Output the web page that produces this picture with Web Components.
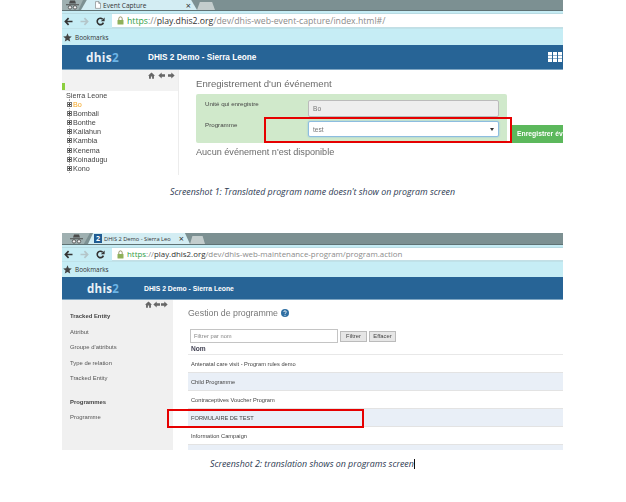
<!DOCTYPE html>
<html>
<head>
<meta charset="utf-8">
<title>Translated program name</title>
<style>
  html, body { margin: 0; padding: 0; background: #fff; }
  body { width: 626px; height: 502px; overflow: hidden; font-family: "Liberation Sans", Arial, sans-serif; }
</style>
</head>
<body>
<issue-page>
  <browser-shot tab="Event Capture" tab-width="116" tab-pad="14" tab-size="6.6" spy-width="21" new-tab="18" strip="11" gap="3" address="14" bookmarks="17" url-size="8.7" path="/dev/dhis-web-event-capture/index.html#/">
    <dhis-header title="DHIS 2 Demo - Sierra Leone" height="25" logo-size="11.8" title-size="8.2" title-left="86" logo-left="24" grid></dhis-header>
    <event-screen></event-screen>
  </browser-shot>
  <shot-caption gap="10" left="108" size="8.8">Screenshot 1: Translated program name doesn't show on program screen</shot-caption>
  <browser-shot style="margin-top:34px" tab="DHIS 2 Demo - Sierra Leo" badge tab-width="102" tab-pad="6" tab-size="5.7" spy-width="28" new-tab="15" strip="12" gap="3" address="13" bookmarks="16" url-size="7.9" path="/dev/dhis-web-maintenance-program/program.action">
    <dhis-header title="DHIS 2 Demo - Sierra Leone" height="23" logo-size="11.5" title-size="6.8" title-left="82" logo-left="25"></dhis-header>
    <program-screen></program-screen>
  </browser-shot>
  <shot-caption gap="7" left="148" size="8.85" cursor>Screenshot 2: translation shows on programs screen</shot-caption>
</issue-page>

<script>
// page column, everything sits 62px in from the left like the pasted screenshots
class IssuePage extends HTMLElement {
  constructor() {
    super();
    this.attachShadow({ mode: 'open' });
    this.shadowRoot.innerHTML = `
      <style>
        :host { display: flex; flex-direction: column; width: 501px; margin-left: 62px; }
      </style>
      <slot></slot>
    `;
  }
}

class BrowserShot extends HTMLElement {
  constructor() {
    super();
    this.attachShadow({ mode: 'open' });
  }

  connectedCallback() {
    const a = n => this.getAttribute(n);
    const badge = this.hasAttribute('badge')
      ? '<span class="badge">2</span>'
      : `<svg class="file" width="6" height="8" viewBox="0 0 8 10"><path d="M.7.5h4.4l2.2 2.3v6.7H.7z M5 .5v2.4h2.3" fill="#fff" stroke="#777" stroke-width=".8"/></svg>`;
    this.shadowRoot.innerHTML = `
      <style>
        :host { display: block; width: 501px; overflow: hidden; filter: blur(.4px); font-family: "Open Sans", "Liberation Sans", sans-serif; }
        .strip { display: flex; height: ${a('strip')}px; box-sizing: border-box; background: #7c9092; border-bottom: 1px solid #5f7274; }
        .spy { width: ${a('spy-width')}px; background: #9fb0b1; display: flex; align-items: center; justify-content: center; clip-path: polygon(0 0, 100% 0, 78% 100%, 0 100%); }
        .tab { width: ${a('tab-width')}px; margin-left: -2px; box-sizing: border-box; padding: 0 6px 0 ${a('tab-pad')}px; background: #d3edf3; display: flex; align-items: center; gap: 2px; font-size: ${a('tab-size')}px; color: #333; white-space: nowrap; clip-path: polygon(0 100%, 5% 0, 95% 0, 100% 100%); }
        .tab b { font-weight: 400; flex: 1; }
        .tab i { font-style: normal; font-size: 9px; color: #333; }
        .badge { width: 8px; height: 9px; background: #215c92; color: #fff; font-size: 7px; font-weight: 700; line-height: 9px; text-align: center; }
        .new { width: ${a('new-tab')}px; height: 8px; margin-top: auto; background: #c3cdcd; clip-path: polygon(0 100%, 16% 0, 84% 0, 100% 100%); }
        .sep { height: ${a('gap')}px; background: #c6ecf4; box-sizing: border-box; border-bottom: 1px solid #b9dbe2; }
        .address { display: flex; height: ${a('address')}px; background: #c6edf5; }
        .nav { width: 50px; display: flex; align-items: center; gap: 7px; padding-left: 2px; box-sizing: border-box; }
        .url { flex: 1; background: #fff; display: flex; align-items: center; gap: 3px; padding-left: 5px; font-size: ${a('url-size')}px; white-space: nowrap; color: #8b8b8b; border-bottom: 1px solid #c3dfe5; }
        .url em { font-style: normal; color: #2f9e46; }
        .url strong { font-weight: 400; color: #333; }
        .marks { height: ${a('bookmarks')}px; background: #c6edf5; display: flex; align-items: center; gap: 3px; padding-left: 1px; font-size: 6.4px; color: #333; box-sizing: border-box; border-top: 1px solid #bfe2e9; }
      </style>
      <div class="strip">
        <div class="spy">
          <svg width="15" height="10" viewBox="0 0 15 10"><path d="M4 3.4 5 .6h5l1 2.8z M1 4.2h13v1H1z" fill="#4c4c4c"/><circle cx="5" cy="7.4" r="1.7" fill="#f3f3f3" stroke="#444" stroke-width=".8"/><circle cx="10" cy="7.4" r="1.7" fill="#f3f3f3" stroke="#444" stroke-width=".8"/></svg>
        </div>
        <div class="tab">${badge}<b>${a('tab')}</b><i>×</i></div>
        <div class="new"></div>
      </div>
      <div class="sep"></div>
      <div class="address">
        <div class="nav">
          <svg width="9" height="9" viewBox="0 0 9 9"><path d="M8.5 4.5H2M4.6 1.2 1.4 4.5l3.2 3.3" fill="none" stroke="#333" stroke-width="1.7"/></svg>
          <svg width="9" height="9" viewBox="0 0 9 9"><path d="M.5 4.5H7M4.4 1.2l3.2 3.3-3.2 3.3" fill="none" stroke="#b4c5c9" stroke-width="1.7"/></svg>
          <svg width="9" height="9" viewBox="0 0 9 9"><path d="M7.4 5.6A3.2 3.2 0 1 1 6.6 2.1" fill="none" stroke="#333" stroke-width="1.6"/><path d="M8.6.4v3.8H4.8z" fill="#333"/></svg>
        </div>
        <div class="url">
          <svg width="7" height="9" viewBox="0 0 7 9"><path d="M1.8 4V2.6a1.7 1.7 0 0 1 3.4 0V4" fill="none" stroke="#8a8a5a" stroke-width=".9"/><rect x=".5" y="4" width="6" height="4.6" rx=".5" fill="#8fb05a"/></svg>
          <span><em>https</em><span>://</span><strong>play.dhis2.org</strong>${a('path')}</span>
        </div>
      </div>
      <div class="marks">
        <svg width="9" height="9" viewBox="0 0 10 10"><path d="M5 .4 6.4 3.6l3.4.3-2.6 2.2.8 3.4L5 7.7 2 9.5l.8-3.4L.2 3.9l3.4-.3z" fill="#444"/></svg>
        <span>Bookmarks</span>
      </div>
      <slot></slot>
    `;
  }
}

class DhisHeader extends HTMLElement {
  constructor() {
    super();
    this.attachShadow({ mode: 'open' });
  }

  connectedCallback() {
    const a = n => this.getAttribute(n);
    const grid = this.hasAttribute('grid')
      ? `<svg class="grid" width="14" height="10" viewBox="0 0 14 10" fill="#fff"><path d="M0 0h4v3H0zM5 0h4v3H5zM10 0h4v3h-4zM0 3.5h4v3H0zM5 3.5h4v3H5zM10 3.5h4v3h-4zM0 7h4v3H0zM5 7h4v3H5zM10 7h4v3h-4z"/></svg>`
      : '';
    this.shadowRoot.innerHTML = `
      <style>
        :host { display: flex; align-items: center; height: ${a('height')}px; background: #276496; border-bottom: 1px solid #7fa6c3; box-sizing: border-box; color: #fff; font-family: "Liberation Sans", sans-serif; }
        .logo { margin-left: ${a('logo-left')}px; font: 700 ${a('logo-size')}px "Open Sans", sans-serif; letter-spacing: .3px; color: #e9f1f7; }
        .logo span { color: #6db5e6; }
        .title { font-size: ${a('title-size')}px; font-weight: 700; white-space: nowrap; }
        .brand { width: ${a('title-left')}px; flex: none; }
        .grid { margin-left: auto; margin-right: 1px; }
      </style>
      <div class="brand"><div class="logo">dhis<span>2</span></div></div>
      <div class="title">${a('title')}</div>
      ${grid}
    `;
  }
}

// small home / back / forward group at the top of both sidebars
class NavIcons extends HTMLElement {
  constructor() {
    super();
    this.attachShadow({ mode: 'open' });
    this.shadowRoot.innerHTML = `
      <style>
        :host { display: flex; gap: var(--nav-gap, 3px); justify-content: flex-end; color: #666; }
      </style>
      <svg width="7" height="7" viewBox="0 0 8 8" fill="currentColor"><path d="M4 .6 0 4.2h1.2V7.6h2.1V5.2h1.4v2.4h2.1V4.2H8z"/></svg>
      <svg width="7" height="7" viewBox="0 0 8 8" fill="currentColor"><path d="M4.2.5 .4 4l3.8 3.5V5.4H8V2.6H4.2z"/></svg>
      <svg width="7" height="7" viewBox="0 0 8 8" fill="currentColor"><path d="M3.8.5 7.6 4 3.8 7.5V5.4H0V2.6h3.8z"/></svg>
    `;
  }
}

class TreeItem extends HTMLElement {
  constructor() {
    super();
    this.attachShadow({ mode: 'open' });
    this.shadowRoot.innerHTML = `
      <style>
        :host { display: flex; align-items: center; height: 9.1px; padding-left: 5px; font-size: 7.2px; color: #444; white-space: nowrap; }
        svg { margin-right: 1px; flex: none; }
      </style>
      <svg width="5" height="5" viewBox="0 0 5 5"><rect x=".5" y=".5" width="4" height="4" fill="#fff" stroke="#777"/><path d="M1 2.5h3M2.5 1v3" stroke="#444"/></svg>
      <slot></slot>
    `;
  }
}

class EventScreen extends HTMLElement {
  constructor() {
    super();
    this.attachShadow({ mode: 'open' });
    this.shadowRoot.innerHTML = `
      <style>
        :host { display: grid; grid-template-columns: 117px 1fr; height: 105px; position: relative; font-family: "Liberation Sans", sans-serif; overflow: hidden; }
        .side { border-right: 1px solid #ececec; }
        .side-top { height: 21px; background: #f2f2f2; box-sizing: border-box; padding: 2px 3px 0 0; position: relative; }
        .tick { position: absolute; left: 0; bottom: 1px; width: 3px; height: 7px; background: #8ccf3f; }
        .tree { position: relative; }
        .tree::before { content: ""; position: absolute; left: 7px; top: 8px; bottom: 0; border-left: 1px dotted #aaa; }
        .root { font-size: 7.2px; color: #444; padding-left: 4px; height: 9px; line-height: 9px; }
        tree-item { position: relative; }
        .main { padding: 8px 0 0 17px; color: #666; }
        h2 { margin: 0; font-size: 9.6px; font-weight: 400; line-height: 12px; color: #6a6a6a; }
        .panel { margin-top: 4px; width: 311px; height: 49px; box-sizing: border-box; background: #d0e9cb; border-radius: 2px; display: grid; grid-template-columns: 112px 191px; grid-template-rows: 17px 16px; row-gap: 4px; padding: 6px 0 0 0; }
        label { font-size: 6.2px; color: #444; padding: 0 0 0 9px; }
        .field { box-sizing: border-box; border: 1px solid #bbb; border-radius: 2px; font-size: 6.6px; color: #777; display: flex; align-items: center; justify-content: space-between; padding: 0 4px; }
        .field.off { background: #eee; }
        .field.on { background: #fff; border-color: #8dbde0; box-shadow: 0 0 2px #8dbde0; }
        .field svg { flex: none; }
        .save { position: absolute; left: 448px; top: 55px; width: 53px; height: 18px; box-sizing: border-box; padding-left: 6px; background: #5cb85c; border-left: 1px solid #3e9a3e; color: #fff; font-size: 6.8px; font-weight: 700; line-height: 18px; white-space: nowrap; overflow: hidden; }
        .none { margin-top: 3px; font-size: 9.1px; line-height: 12px; color: #6a6a6a; }
        .mark { position: absolute; left: 202px; top: 47px; width: 248px; height: 26px; box-sizing: border-box; border: 2px solid #e60000; }
      </style>
      <div class="side">
        <div class="side-top"><span class="tick"></span><nav-icons></nav-icons></div>
        <div class="tree">
          <div class="root">Sierra Leone</div>
          <tree-item><span style="color:#f5a623">Bo</span></tree-item>
          <tree-item>Bombali</tree-item>
          <tree-item>Bonthe</tree-item>
          <tree-item>Kailahun</tree-item>
          <tree-item>Kambia</tree-item>
          <tree-item>Kenema</tree-item>
          <tree-item>Koinadugu</tree-item>
          <tree-item>Kono</tree-item>
        </div>
      </div>
      <div class="main">
        <h2>Enregistrement d'un événement</h2>
        <div class="panel">
          <label>Unité qui enregistre</label>
          <div class="field off">Bo</div>
          <label>Programme</label>
          <div class="field on">test<svg width="4" height="3" viewBox="0 0 4 3"><path d="M0 0h4L2 3z" fill="#333"/></svg></div>
        </div>
        <div class="none">Aucun événement n'est disponible</div>
      </div>
      <div class="save">Enregistrer év</div>
      <div class="mark"></div>
    `;
  }
}

class ProgramScreen extends HTMLElement {
  constructor() {
    super();
    this.attachShadow({ mode: 'open' });
    this.shadowRoot.innerHTML = `
      <style>
        :host { display: grid; grid-template-columns: 111px 1fr; height: 150px; position: relative; overflow: hidden; font-family: "Liberation Sans", sans-serif; }
        .side { background: #f0f0f0; padding: 1px 5px 0 8px; font-size: 5.9px; color: #555; }
        .side div { height: 15.5px; line-height: 15.5px; white-space: nowrap; }
        .side .head { font-weight: 700; color: #444; }
        .side .gap { margin-top: 8px; }
        nav-icons { --nav-gap: 1px; height: 8px; }
        .main { padding: 6px 0 0 15px; }
        h2 { margin: 0; display: flex; align-items: center; gap: 3px; font-size: 8.8px; font-weight: 400; line-height: 14px; color: #777; }
        .tools { display: flex; gap: 2px; margin: 9px 0 0 2px; height: 14px; align-items: center; }
        .filter { width: 148px; height: 14px; box-sizing: border-box; border: 1px solid #c4c4c4; font-size: 5.8px; line-height: 12px; padding-left: 3px; color: #888; }
        button { width: 25px; height: 9px; box-sizing: content-box; padding: 0; border: 1px solid #bbb; background: #e6e6e6; font: 5.8px/7px "Liberation Sans", sans-serif; color: #444; display: block; }
        .nom { margin-top: 1px; padding-left: 3px; height: 11px; box-sizing: border-box; line-height: 10px; font-size: 6.6px; font-weight: 700; color: #445; border-bottom: 1px solid #e8e8e8; }
        .row { height: 18px; line-height: 18px; padding-left: 3px; font-size: 5.7px; color: #444; white-space: nowrap; box-sizing: border-box; border-bottom: 1px solid #e3e3e3; }
        .row.alt { background: #e9eff7; }
        .mark { position: absolute; left: 105px; top: 109px; width: 197px; height: 19px; box-sizing: border-box; border: 2px solid #e60000; }
      </style>
      <div class="side">
        <nav-icons></nav-icons>
        <div class="head">Tracked Entity</div>
        <div>Attribut</div>
        <div>Groupe d'attributs</div>
        <div>Type de relation</div>
        <div>Tracked Entity</div>
        <div class="head gap">Programmes</div>
        <div>Programme</div>
      </div>
      <div class="main">
        <h2>Gestion de programme
          <svg width="8" height="8" viewBox="0 0 8 8"><circle cx="4" cy="4" r="4" fill="#2f6fa3"/><path d="M2.8 3a1.2 1.2 0 1 1 1.7 1.1c-.4.2-.5.4-.5.8" fill="none" stroke="#fff" stroke-width=".9"/><circle cx="4" cy="6.2" r=".55" fill="#fff"/></svg>
        </h2>
        <div class="tools">
          <div class="filter">Filtrer par nom</div>
          <button>Filtrer</button>
          <button>Effacer</button>
        </div>
        <div class="nom">Nom</div>
        <div class="row">Antenatal care visit - Program rules demo</div>
        <div class="row alt">Child Programme</div>
        <div class="row">Contraceptives Voucher Program</div>
        <div class="row alt">FORMULAIRE DE TEST</div>
        <div class="row">Information Campaign</div>
        <div class="row alt"></div>
      </div>
      <div class="mark"></div>
    `;
  }
}

class ShotCaption extends HTMLElement {
  constructor() {
    super();
    this.attachShadow({ mode: 'open' });
  }

  connectedCallback() {
    const cursor = this.hasAttribute('cursor') ? '<span class="cursor"></span>' : '';
    this.shadowRoot.innerHTML = `
      <style>
        :host { display: block; margin-top: ${this.getAttribute('gap')}px; padding-left: ${this.getAttribute('left')}px; height: 14px; font: italic ${this.getAttribute('size')}px/14px "Open Sans", sans-serif; color: #2d3a52; white-space: nowrap; }
        .cursor { display: inline-block; width: 1px; height: 10px; background: #111; vertical-align: -2px; }
      </style>
      <slot></slot>${cursor}
    `;
  }
}

customElements.define('issue-page', IssuePage);
customElements.define('browser-shot', BrowserShot);
customElements.define('dhis-header', DhisHeader);
customElements.define('nav-icons', NavIcons);
customElements.define('tree-item', TreeItem);
customElements.define('event-screen', EventScreen);
customElements.define('program-screen', ProgramScreen);
customElements.define('shot-caption', ShotCaption);
</script>
</body>
</html>
